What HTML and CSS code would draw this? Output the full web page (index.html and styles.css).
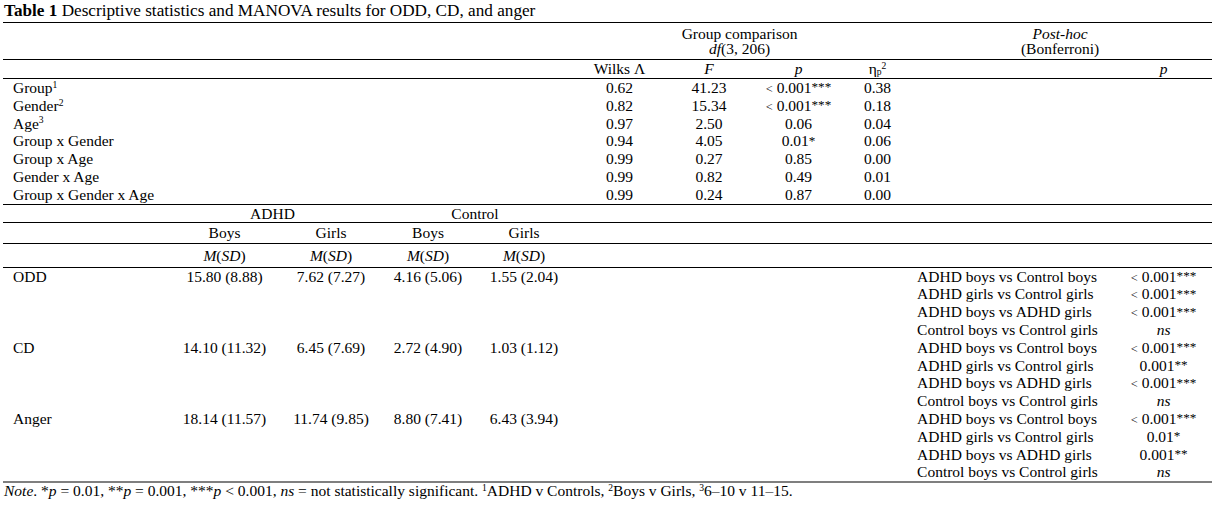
FILE: index.html
```html
<!DOCTYPE html>
<html lang="en">
<head>
<meta charset="utf-8">
<title>Table 1</title>
<link rel="stylesheet" href="styles.css">
</head>
<body>
<div class="page">
  <div class="caption"><b>Table 1</b> Descriptive statistics and MANOVA results for ODD, CD, and anger</div>
  <table class="stats">
    <colgroup>
      <col class="c-a"><col class="c-b"><col class="c-c"><col class="c-d"><col class="c-e">
      <col class="c-f"><col class="c-g"><col class="c-h"><col class="c-i"><col class="c-j"><col class="c-k">
    </colgroup>
    <tbody>
      <tr class="hd1 rule">
        <td colspan="5"></td>
        <td colspan="4" class="ctr">Group comparison<br><i>df</i>(3, 206)</td>
        <td colspan="2" class="ctr"><i>Post-hoc</i><br>(Bonferroni)</td>
      </tr>
      <tr class="hd2 rule">
        <td colspan="5"></td>
        <td class="ctr">Wilks Λ</td>
        <td class="ctr"><i>F</i></td>
        <td class="ctr"><i>p</i></td>
        <td class="ctr">η<sub>p</sub><sup>2</sup></td>
        <td></td>
        <td class="ctr"><i>p</i></td>
      </tr>
      <tr class="row rule">
        <td colspan="5" class="lab">Group<sup>1</sup></td>
        <td class="ctr">0.62</td><td class="ctr">41.23</td><td class="ctr"><span class="lt">&lt;</span> 0.001<span class="st">***</span></td><td class="ctr">0.38</td><td></td><td></td>
      </tr>
      <tr class="row">
        <td colspan="5" class="lab">Gender<sup>2</sup></td>
        <td class="ctr">0.82</td><td class="ctr">15.34</td><td class="ctr"><span class="lt">&lt;</span> 0.001<span class="st">***</span></td><td class="ctr">0.18</td><td></td><td></td>
      </tr>
      <tr class="row">
        <td colspan="5" class="lab">Age<sup>3</sup></td>
        <td class="ctr">0.97</td><td class="ctr">2.50</td><td class="ctr">0.06</td><td class="ctr">0.04</td><td></td><td></td>
      </tr>
      <tr class="row">
        <td colspan="5" class="lab">Group x Gender</td>
        <td class="ctr">0.94</td><td class="ctr">4.05</td><td class="ctr">0.01<span class="st">*</span></td><td class="ctr">0.06</td><td></td><td></td>
      </tr>
      <tr class="row">
        <td colspan="5" class="lab">Group x Age</td>
        <td class="ctr">0.99</td><td class="ctr">0.27</td><td class="ctr">0.85</td><td class="ctr">0.00</td><td></td><td></td>
      </tr>
      <tr class="row">
        <td colspan="5" class="lab">Gender x Age</td>
        <td class="ctr">0.99</td><td class="ctr">0.82</td><td class="ctr">0.49</td><td class="ctr">0.01</td><td></td><td></td>
      </tr>
      <tr class="row">
        <td colspan="5" class="lab">Group x Gender x Age</td>
        <td class="ctr">0.99</td><td class="ctr">0.24</td><td class="ctr">0.87</td><td class="ctr">0.00</td><td></td><td></td>
      </tr>
      <tr class="grp rule">
        <td></td>
        <td colspan="2" class="ctr">ADHD</td>
        <td colspan="2" class="ctr">Control</td>
        <td colspan="6"></td>
      </tr>
      <tr class="sex rule">
        <td></td>
        <td class="ctr">Boys</td><td class="ctr">Girls</td><td class="ctr">Boys</td><td class="ctr">Girls</td>
        <td colspan="6"></td>
      </tr>
      <tr class="msd rule">
        <td></td>
        <td class="ctr"><i>M</i>(<i>SD</i>)</td><td class="ctr"><i>M</i>(<i>SD</i>)</td><td class="ctr"><i>M</i>(<i>SD</i>)</td><td class="ctr"><i>M</i>(<i>SD</i>)</td>
        <td colspan="6"></td>
      </tr>
      <tr class="prow rule">
        <td class="lab">ODD</td>
        <td class="ctr">15.80 (8.88)</td><td class="ctr">7.62 (7.27)</td><td class="ctr">4.16 (5.06)</td><td class="ctr">1.55 (2.04)</td>
        <td colspan="4"></td>
        <td class="ph">ADHD boys vs Control boys</td><td class="ctr"><span class="lt">&lt;</span> 0.001<span class="st">***</span></td>
      </tr>
      <tr class="prow">
        <td colspan="9"></td>
        <td class="ph">ADHD girls vs Control girls</td><td class="ctr"><span class="lt">&lt;</span> 0.001<span class="st">***</span></td>
      </tr>
      <tr class="prow">
        <td colspan="9"></td>
        <td class="ph">ADHD boys vs ADHD girls</td><td class="ctr"><span class="lt">&lt;</span> 0.001<span class="st">***</span></td>
      </tr>
      <tr class="prow">
        <td colspan="9"></td>
        <td class="ph">Control boys vs Control girls</td><td class="ctr"><i>ns</i></td>
      </tr>
      <tr class="prow">
        <td class="lab">CD</td>
        <td class="ctr">14.10 (11.32)</td><td class="ctr">6.45 (7.69)</td><td class="ctr">2.72 (4.90)</td><td class="ctr">1.03 (1.12)</td>
        <td colspan="4"></td>
        <td class="ph">ADHD boys vs Control boys</td><td class="ctr"><span class="lt">&lt;</span> 0.001<span class="st">***</span></td>
      </tr>
      <tr class="prow">
        <td colspan="9"></td>
        <td class="ph">ADHD girls vs Control girls</td><td class="ctr">0.001<span class="st">**</span></td>
      </tr>
      <tr class="prow">
        <td colspan="9"></td>
        <td class="ph">ADHD boys vs ADHD girls</td><td class="ctr"><span class="lt">&lt;</span> 0.001<span class="st">***</span></td>
      </tr>
      <tr class="prow">
        <td colspan="9"></td>
        <td class="ph">Control boys vs Control girls</td><td class="ctr"><i>ns</i></td>
      </tr>
      <tr class="prow">
        <td class="lab">Anger</td>
        <td class="ctr">18.14 (11.57)</td><td class="ctr">11.74 (9.85)</td><td class="ctr">8.80 (7.41)</td><td class="ctr">6.43 (3.94)</td>
        <td colspan="4"></td>
        <td class="ph">ADHD boys vs Control boys</td><td class="ctr"><span class="lt">&lt;</span> 0.001<span class="st">***</span></td>
      </tr>
      <tr class="prow">
        <td colspan="9"></td>
        <td class="ph">ADHD girls vs Control girls</td><td class="ctr">0.01<span class="st">*</span></td>
      </tr>
      <tr class="prow">
        <td colspan="9"></td>
        <td class="ph">ADHD boys vs ADHD girls</td><td class="ctr">0.001<span class="st">**</span></td>
      </tr>
      <tr class="prow last">
        <td colspan="9"></td>
        <td class="ph">Control boys vs Control girls</td><td class="ctr"><i>ns</i></td>
      </tr>
    </tbody>
  </table>
  <div class="note"><i>Note</i>. *<i>p</i> = 0.01, **<i>p</i> = 0.001, ***<i>p</i> &lt; 0.001, <i>ns</i> = not statistically significant. <sup>1</sup>ADHD v Controls, <sup>2</sup>Boys v Girls, <sup>3</sup>6–10 v 11–15.</div>
</div>
</body>
</html>
```

FILE: styles.css
```css
html, body {
  margin: 0;
  padding: 0;
  background: #ffffff;
}

body {
  font-family: "Liberation Serif", "Times New Roman", serif;
  color: #000000;
}

.page {
  padding: 0 0 0 3px;
  width: 1209px;
}

.caption {
  font-size: 17.2px;
  line-height: 22px;
  height: 22px;
  padding-left: 1px;
  white-space: nowrap;
}

.stats {
  width: 1209px;
  border-collapse: collapse;
  table-layout: fixed;
  font-size: 15.5px;
}

.c-a { width: 163px; }
.c-b { width: 117px; }
.c-c { width: 96px; }
.c-d { width: 98px; }
.c-e { width: 94px; }
.c-f { width: 97px; }
.c-g { width: 82px; }
.c-h { width: 97px; }
.c-i { width: 61px; }
.c-j { width: 207px; }
.c-k { width: 97px; }

.stats td {
  padding: 0;
  white-space: nowrap;
  vertical-align: middle;
}

.stats tr.rule td {
  border-top: 1px solid #000000;
}

.stats tr.last td {
  border-bottom: 2px solid #7f7f7f;
}

.ctr { text-align: center; }
.lab { padding-left: 10px !important; text-align: left; }
.ph { padding-left: 9px !important; text-align: left; }

.hd1 td {
  line-height: 15px;
  padding-top: 3px !important;
  padding-bottom: 3px !important;
}

.hd2 td {
  line-height: 18px;
  height: 18px;
}

.row td {
  line-height: 17.8px;
  height: 17.8px;
}

.prow td {
  line-height: 17.8px;
  height: 17.8px;
}

.grp td {
  line-height: 17px;
  height: 17px;
}

.sex td {
  line-height: 20px;
  height: 20px;
}

.msd td {
  line-height: 23px;
  height: 23px;
}

sup {
  font-size: 0.62em;
  line-height: 0;
  vertical-align: baseline;
  position: relative;
  top: -0.55em;
}

sub {
  font-size: 0.62em;
  line-height: 0;
  vertical-align: baseline;
  position: relative;
  top: 0.15em;
}

.st {
  font-size: 0.85em;
  line-height: 0;
  position: relative;
  top: -0.12em;
}

.lt {
  font-size: 0.8em;
  line-height: 0;
}

.note {
  font-size: 15.5px;
  line-height: 16px;
  padding-left: 1px;
  white-space: nowrap;
}
```
